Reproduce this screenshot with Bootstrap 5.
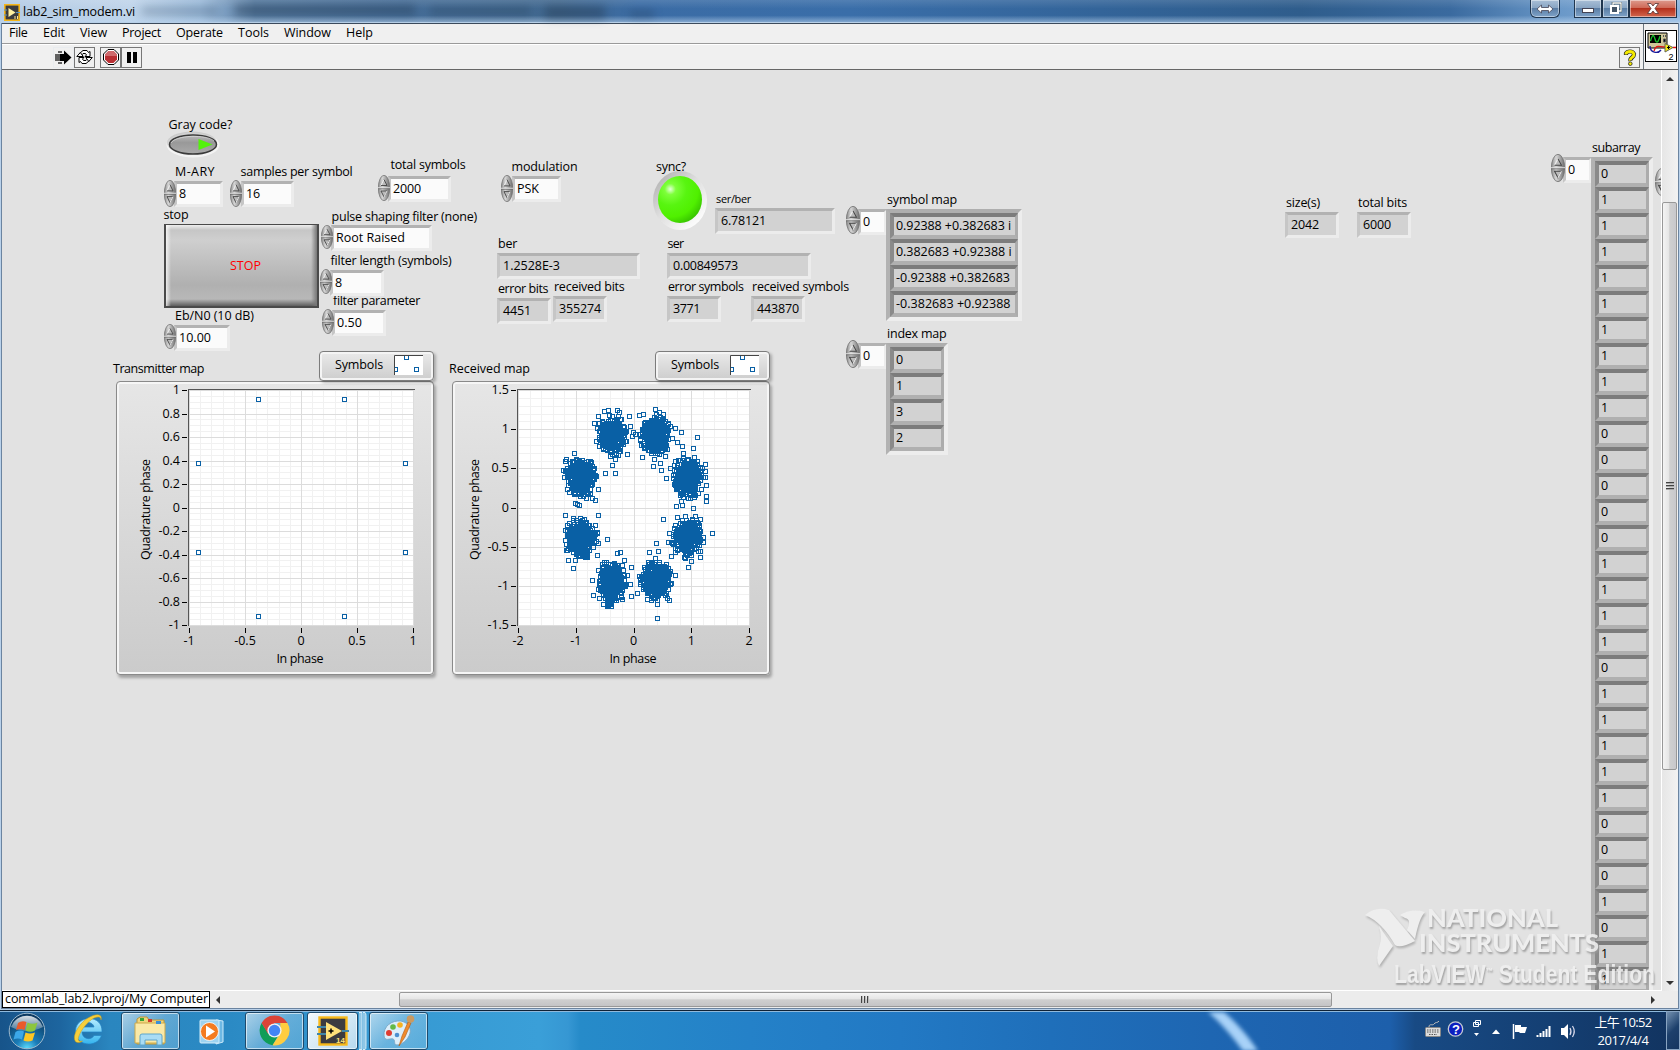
<!DOCTYPE html>
<html lang="zh-Hant">
<head>
<meta charset="utf-8">
<title>lab2_sim_modem.vi</title>
<link href="https://cdn.jsdelivr.net/npm/bootstrap@5.3.0/dist/css/bootstrap.min.css" rel="stylesheet">
<style>
html,body{height:1050px;overflow:hidden}
body{width:1680px;font:12.5px/16px "Open Sans","Noto Sans","Noto Sans CJK TC",sans-serif;color:#000;background:#b9d1ea}
svg{display:block}
.fit{white-space:nowrap;display:inline-block;height:16px;line-height:16px}
.titlebar{height:23px;background:linear-gradient(180deg,rgba(255,255,255,.12) 0,transparent 40%,transparent 70%,rgba(190,215,240,.55) 100%),linear-gradient(90deg,#b4cbe4 0,#bfd4ea 130px,#9cbbdb 200px,#54799f 255px,#456d98 400px,#41688f 560px,#3b6ca5 640px,#3a6ea9 850px,#336499 1100px,#2f5d8c 1300px,#3a6a9f 1450px,#6a98c8 1560px,#8db5de 1680px);border-bottom:1px solid #b8d0e8}
.caption{padding-top:2px}
.blurs{left:140px;top:2px;width:540px;height:19px;filter:blur(4px)}
.wbtn{height:18px;border:1px solid #20364f;border-top:0;box-shadow:inset 0 0 0 1px rgba(255,255,255,.45);background:linear-gradient(#a9bfd6 0,#8aa6c4 45%,#5b7ea5 50%,#7fa3c9 100%)}
.wbtn.shut{background:linear-gradient(#dd9a8d 0,#cf6a58 45%,#b5301c 50%,#d2674e 100%)}
.client{height:985px;margin:0 2px;border-top:1px solid #3c4b5c;background:#f0f0f0;box-shadow:0 0 0 1px #6b84a0}
.menus{height:20px;border-bottom:1px solid #9a9a9a;padding-bottom:2px}
.tools{height:25px;border-top:1px solid #fff}
.tbtn{width:21px;height:21px;border:1px solid #777}
.panelwrap{height:922px;border-top:1px solid #666}
.front{background:#e2e2e2;width:1660px;height:921px;overflow:hidden;border-right:1px solid #fff;border-bottom:1px solid #fff}
.vsb{width:16px;background:linear-gradient(90deg,#e6e6e6,#f2f2f2)}
.vthumb{width:15px;height:568px;border:1px solid #989898;border-radius:2px;background:linear-gradient(90deg,#f4f4f4 0,#e6e6e6 45%,#cfcfcf 52%,#c8c8cc 100%)}
.hsb{height:17px;background:#ececec}
.hthumb{width:933px;height:15px;border:1px solid #989898;border-radius:2px;background:linear-gradient(#f4f4f4 0,#e6e6e6 45%,#cfcfcf 52%,#c4c4c6 100%)}
.path-box{width:208px;height:17px;border:1px solid #000;background:#fff;padding:0 0 2px 2px}
.item{position:absolute}
.ctl,.ind{position:absolute;border:3px solid;border-color:#b2b2b2 #ececec #ececec #c6c6c6;background:#fbfbfb;padding-left:2px}
.ind{background:#d2d2d2;padding-left:3px}
.arr{position:absolute;border:4px solid;border-color:#aeaeae #ededed #ededed #b2b2b2;background:#b0b0b0}
.cellbox{height:26px;border:4px solid;border-color:#7c7c7c #acacac #b0b0b0 #8a8a8a;border-width:4px 3px 4px 4px;background:#d2d2d2;padding-left:2px}
.stopbtn{position:absolute;left:162px;top:154px;width:155px;height:84px;border:2px solid #4a4a4a;border-top-width:1px;border-radius:0;background:linear-gradient(90deg,rgba(255,255,255,.75) 0,transparent 5px,transparent 145px,#777 100%),linear-gradient(#eee 0,#c6c6c6 5px,#cfcfcf 15px,#b0b0b0 60px,#b8b8b8 74px,#5e5e5e 100%);color:#f00;font-size:12.5px;padding-right:4px}
.chartbox{position:absolute;top:312px;width:318px;height:294px;border:1px solid #8a8a8a;border-radius:4px;box-shadow:inset 0 0 0 2px #f6f6f6,2px 3px 3px rgba(0,0,0,.28);background:linear-gradient(#e6e6e6,#cbcbcb)}
.legendbox{position:absolute;top:281px;width:115px;height:30px;border:1px solid #7c7c7c;border-radius:4px;box-shadow:inset 0 0 0 2px #f4f4f4,2px 2px 3px rgba(0,0,0,.25);background:linear-gradient(#eaeaea,#cdcdcd);padding:0 10px 2px 15px}
.led{position:absolute;left:651px;top:101px;width:54px;height:59px;border-radius:50%;background:linear-gradient(135deg,#b4b4b4 10%,#dedede 45%,#fff 90%);padding:5px;filter:blur(.4px)}
.bulb{width:44px;height:47px;border-radius:50%;background:radial-gradient(circle at 28% 28%,#e4ffd8 0,#7dff3a 12%,#58f510 35%,#50f000 60%,#2cb100 88%,#1e6a05 100%)}
.taskbar{height:40px;margin-top:2px;border-top:1px solid #0f2236;box-shadow:inset 0 1px 0 #8fb9dc;background:linear-gradient(90deg,#17548a 0,#1d659f 60px,#2a86bf 110px,#2b8ac4 230px,#3699d2 380px,#3a9fd8 540px,#3697d3 568px,#268bc9 580px,#2481c8 750px,#2279c4 900px,#1f6fba 1050px,#1e66b2 1210px,#1d5fab 1390px,#184a84 1415px,#143f73 1550px,#12335f 1680px)}
.task{height:38px;width:59px;border:1px solid #1e4a6c;border-radius:3px;box-shadow:inset 0 0 0 1px rgba(255,255,255,.6);background:linear-gradient(135deg,rgba(255,255,255,.6),rgba(200,228,245,.35) 50%,rgba(160,210,235,.3))}
.task.now{background:linear-gradient(135deg,#f3f9fd,#b7d9ee)}
.clock{color:#fff;width:86px;font-size:13px}
.showdesk{width:14px;height:39px;border:1px solid #89a4c2;background:linear-gradient(135deg,#7390b0,#1d406c 50%,#153560)}
.brand{position:absolute;color:#f0f0f0;opacity:.88;font-weight:900;text-shadow:1px 2px 2px #999;white-space:nowrap;line-height:24px}
.brand span{transform-origin:0 50%}
.tm{font-size:9px;vertical-align:9px;line-height:0}
.streak{left:1200px;top:1px;filter:blur(2px)}
</style>
</head>
<body>
<header class="titlebar d-flex justify-content-between position-relative">
  <svg class="blurs position-absolute" viewBox="0 0 540 19"><g fill="#24384f" opacity=".4"><rect x="2" y="5" width="75" height="8" opacity=".6"/><rect x="95" y="3" width="180" height="10"/><rect x="290" y="5" width="100" height="8" opacity=".8"/><rect x="405" y="4" width="60" height="13"/><rect x="490" y="9" width="24" height="6"/></g></svg>
  <div class="caption d-flex align-items-center position-relative ps-1">
    <svg width="16" height="17" viewBox="0 0 16 17"><rect x=".8" y=".8" width="14.4" height="15.4" fill="#3b3b3f" stroke="#f3b51c" stroke-width="1.6"/><path d="M4.500 4l7 4.500-7 4.500z" fill="#fff0a0"/><path d="M0 6h3M0 11h3M12 8.500h4" stroke="#5c93b8"/><path d="M11 12v3M13.500 12v3" stroke="#ffe79a"/></svg>
    <span class="fit" style="margin-left:3px" data-w="112">lab2_sim_modem.vi</span>
  </div>
  <div class="d-flex align-items-start" style="padding-right:3px">
    <div class="wbtn rounded-bottom d-flex align-items-center justify-content-center" style="width:30px;margin-right:14px"><svg width="18" height="10" viewBox="0 0 18 10"><path d="M1 5l4.500-4v2.500h7V1L17 5l-4.500 4V6.500h-7V9z" fill="#fff" stroke="#445" stroke-width=".8"/></svg></div>
    <div class="wbtn d-flex align-items-center justify-content-center" style="width:28px"><svg width="12" height="10"><rect x=".5" y="4.500" width="11" height="4" fill="#fff" stroke="#445"/></svg></div>
    <div class="wbtn d-flex align-items-center justify-content-center" style="width:27px"><svg width="13" height="13" viewBox="0 0 13 13"><path d="M4 3V1h8v8h-2" fill="none" stroke="#344" stroke-width="2.500"/><path d="M4 3V1h8v8h-2" fill="none" stroke="#fff" stroke-width="1.300"/><rect x="2" y="4" width="7" height="7" fill="#456" stroke="#fff" stroke-width="2"/></svg></div>
    <div class="wbtn shut d-flex align-items-center justify-content-center" style="width:48px"><svg width="12" height="11" viewBox="0 0 12 11"><path d="M.5.500h3.500l2 2.500L8 .5h3.500L8 5.500l3.500 5H8L6 8l-2 2.500H.5l3.500-5z" fill="#fff" stroke="#533" stroke-width=".8"/></svg></div>
  </div>
</header>

<main class="client">
  <div class="d-flex">
    <div class="flex-grow-1">
      <nav class="menus d-flex align-items-center" id="menus"></nav>
      <div class="tools d-flex align-items-center">
        <div class="tbtn d-flex align-items-center justify-content-center border-secondary-subtle" style="margin-left:51px"><svg width="17" height="15" viewBox="0 0 17 15"><path d="M0 4v7M2 4v7M4 1v2M4 4v7M4 12v2M6 1v2M6 12v2" stroke="#000" stroke-width="1.200"/><path d="M5 4h4V.5l7.500 7-7.500 7V11H5z"/></svg></div>
        <div class="tbtn d-flex align-items-center justify-content-center"><svg width="17" height="16" viewBox="0 0 17 16"><g fill="#fff" stroke="#000"><path d="M3.500 4.500L7 1.500h4l1.500 2 1.500-1v5H9l1.500-1.500-1-1.500H7L5.500 6z"/><path d="M13.500 11.500L10 14.500H6l-1.500-2-1.500 1v-5h5L6.500 10l1 1.500H10l1.500-1.500z"/><path d="M.8 7.500l3.500-4 3 4zM9.800 8.500l3 4 3.500-4z"/></g></svg></div>
        <div class="tbtn d-flex align-items-center justify-content-center" style="margin-left:5px"><svg width="16" height="16" viewBox="0 0 16 16"><path d="M5 .5h6L15.500 5v6L11 15.500H5L.5 11V5z" fill="#fff" stroke="#000"/><path d="M5.500 2h5L14 5.500v5L10.500 14h-5L2 10.500v-5z" fill="#b92f33"/><path d="M5.500 2h5L14 5.500V7H2V5.500z" fill="#cf6a6d"/></svg></div>
        <div class="tbtn d-flex align-items-center justify-content-center"><svg width="10" height="11"><path d="M0 0h4v11H0zM6 0h4v11H6z"/></svg></div>
        <div class="tbtn ms-auto d-flex align-items-center justify-content-center" style="margin-right:3px"><svg width="14" height="17" viewBox="0 0 14 17"><g fill="none"><path d="M3 6V4.500Q4 2.500 7 2.500t4 2.500Q11 7 9 8.500T7.500 12" stroke="#222" stroke-width="4.200"/><path d="M3 5.500V4.500Q4 2.500 7 2.500t4 2.500Q11 7 9 8.500T7.500 11.500" stroke="#f5ea00" stroke-width="2.800"/></g><circle cx="7.300" cy="14.700" r="1.800" fill="#f5ea00" stroke="#222" stroke-width=".8"/></svg></div>
      </div>
    </div>
    <div class="border-start border-secondary d-flex align-items-center justify-content-center" style="width:35px;padding-bottom:1px">
      <svg width="32" height="32" viewBox="0 0 32 32"><rect x=".5" y=".5" width="31" height="31" fill="#fff" stroke="#000"/><path d="M3 3h19v15H3z" fill="#cfc79a" stroke="#000"/><path d="M5 5h11v8H5z"/><path d="M5.500 11c2-7 3-7 4.500-2s3 4 5-3" fill="none" stroke="#18c52a" stroke-width="1.300"/><path d="M18.500 5v2M20.500 5v2M18.500 9v3h2V9z" stroke="#555"/><path d="M5 16c0 7 8 8 11 4" fill="none" stroke="#1a1a9a" stroke-width="1.400"/><path d="M9 21c2-7 5-4 11-4M28 17.500h3" fill="none" stroke="#e01515" stroke-width="1.400"/><path d="M20 13.500l8 4-8 4.500z" fill="#f7ec15" stroke="#665"/><path d="M22 17.500h3M23.500 16v3" stroke="#000"/><text x="23.500" y="29.500" font-size="9" font-family="Liberation Sans">2</text></svg>
    </div>
  </div>
  <div class="panelwrap d-flex">
    <section class="front position-relative" id="front">
      <div class="stopbtn btn d-flex align-items-center justify-content-center"><span class="fit" data-w="31">STOP</span></div>
      <svg class="item" style="left:163px;top:60px" width="56" height="30" viewBox="0 0 56 30"><defs><linearGradient id="tg" x2="0" y2="1"><stop stop-color="#bbb"/><stop offset=".4" stop-color="#999"/><stop offset="1" stop-color="#aaa"/></linearGradient></defs><ellipse cx="28" cy="15" rx="26.500" ry="12.500" fill="#fff" opacity=".6"/><ellipse cx="27" cy="13" rx="25" ry="11.500" fill="#bbb" opacity=".6"/><ellipse cx="28" cy="14.500" rx="23.500" ry="9.500" fill="url(#tg)" stroke="#3a3a3a" stroke-width="1.500"/><path d="M6 13c4-8 36-9 43-2" fill="none" stroke="#ddd" opacity=".7"/><path d="M33.500 9l14 5.500-14 5.500z" fill="#53f20c"/></svg>
      <div class="led"><div class="bulb"></div></div>
    </section>
    <div class="vsb d-flex flex-column">
      <svg width="16" height="132"><path d="M4 11l4-4 4 4z" fill="#333"/></svg>
      <div class="vthumb d-flex align-items-center justify-content-center"><svg width="8" height="9"><path d="M0 .5h8M0 3.500h8M0 6.500h8" stroke="#444"/><path d="M0 1.500h8M0 4.500h8M0 7.500h8" stroke="#aaa"/></svg></div>
      <svg class="mt-auto" width="16" height="16"><path d="M4 6l4 4 4-4z" fill="#333"/></svg>
    </div>
  </div>
  <div class="hsb d-flex align-items-center">
    <div class="path-box d-flex align-items-center"><span class="fit" data-w="203">commlab_lab2.lvproj/My Computer</span></div>
    <svg width="189" height="16"><path d="M10 4L6 8l4 4z" fill="#333"/></svg>
    <div class="hthumb d-flex align-items-center justify-content-center"><svg width="9" height="7"><path d="M.5 0v7M3.500 0v7M6.500 0v7" stroke="#444"/><path d="M1.500 0v7M4.500 0v7M7.500 0v7" stroke="#bbb"/></svg></div>
    <svg class="ms-auto" style="margin-right:21px" width="8" height="16"><path d="M2 4l4 4-4 4z" fill="#333"/></svg>
  </div>
</main>

<footer class="taskbar d-flex align-items-center position-relative" id="taskbar">
  <svg class="streak position-absolute" width="70" height="39"><path d="M8 0h16c14 12 24 24 34 39H43C32 24 22 12 8 0z" fill="#a8d2f8"/></svg>
  <svg width="121" height="40" viewBox="0 0 121 40">
    <defs><radialGradient id="orb" cx=".5" cy="1" r=".9"><stop stop-color="#5fe0ff"/><stop offset=".35" stop-color="#1a7cb8"/><stop offset="1" stop-color="#0c3a62"/></radialGradient><linearGradient id="gl" x2="0" y2="1"><stop stop-color="#fff" stop-opacity=".85"/><stop offset="1" stop-color="#fff" stop-opacity=".2"/></linearGradient><linearGradient id="ie" x2="0" y2="1"><stop stop-color="#b5ecff"/><stop offset="1" stop-color="#35b4ee"/></linearGradient></defs>
    <circle cx="27" cy="20" r="17.800" fill="url(#orb)" stroke="#9fb9cc"/><path d="M11 16a17 17 0 0 1 32 0q-16 8-32 0z" fill="url(#gl)"/>
    <path d="M18 12q4-3 8.500-1l-2 8q-4-2-8.500 0z" fill="#ea5a2a"/><path d="M27.500 11.500q5 2.500 10 0l-2.500 8q-5 2.500-9.500 0z" fill="#8cc63f"/><path d="M15.500 21q4-2.500 8.500-.5l-2 8q-4-2-8.500 0z" fill="#3ba7e8"/><path d="M25.500 21.500q4.500 2 9.500 0l-2.500 8q-4.500 2-9 0z" fill="#fdc623"/>
    <path d="M102 21H82c0 7 9 9 12 3.500h7.500C97 38 74 35 75.500 19 77 4 103 3 102 21zM82 16h12c-1-6-11-6-12 0z" fill="url(#ie)" stroke="#2383c4" stroke-width=".7"/>
    <path d="M101 9c2-8-8-6-16 0-8 7-13 17-9.500 21.500 2 2 5 1 7-.5-4 1-5-1-3.500-5C81 19 88 10 94 7c5-2 7-1 7 2z" fill="#f6cf3c" stroke="#c89b16" stroke-width=".5"/>
  </svg>
  <div class="task d-flex align-items-center justify-content-center"><svg width="34" height="32" viewBox="0 0 34 32"><path d="M3 4l3-2h7l2 3h15v24H3z" fill="#f0d57c" stroke="#b9963a"/><path d="M1 8h30v20H1z" fill="#fae9a8" stroke="#cda94a"/><path d="M6 3h4v3H6z" fill="#3aa635"/><path d="M14 4h4v3h-4z" fill="#d33a2c"/><path d="M22 6h5v3h-5z" fill="#3a8fd8"/><path d="M6 30V21q0-2 2-2h18q2 0 2 2v9h-5v-5H11v5z" fill="#a9dcf4" stroke="#5ea6cc"/></svg></div>
  <svg width="65" height="38" viewBox="0 0 65 38"><path d="M36 8l7 1v21l-7 2z" fill="#6db8e4" stroke="#cdeafa"/><rect x="20" y="8" width="19" height="23" rx="1" fill="#9ed3f0" stroke="#d5eefb"/><circle cx="29.500" cy="19.500" r="9" fill="#f47b20" stroke="#fff" stroke-width=".8"/><path d="M26 13.500l9 6-9 6z" fill="#fff"/></svg>
  <div class="task d-flex align-items-center justify-content-center"><svg width="31" height="31" viewBox="0 0 48 48"><path d="M4 12.500a23 23 0 0 0 17 34.300L31 30 24 24 14 28z" fill="#0f9d58"/><path d="M44 12.500A23 23 0 0 1 21 46.800L33 28V12.500z" fill="#ffcd40"/><path d="M4 12.500A23 23 0 0 1 44 12.500H24L14 29z" fill="#db4437"/><circle cx="24" cy="24" r="11" fill="#f1f1f1"/><circle cx="24" cy="24" r="8.800" fill="#4285f4"/></svg></div>
  <div class="task now d-flex align-items-center justify-content-center" style="width:51px;margin-left:3px"><svg width="32" height="30" viewBox="0 0 32 30"><rect x="2.500" y="1.500" width="27" height="27" fill="#3c3c40" stroke="#f8b91a" stroke-width="2.400"/><path d="M0 11h9M0 18h9M25 15h7" stroke="#3f86a8" stroke-width="2"/><path d="M9 6l16 9-16 9z" fill="#ffe27a"/><path d="M11.500 15h5M14 12.500v5" stroke="#000" stroke-width="1.500"/><text x="19" y="26.500" font-size="8" font-weight="700" fill="#ffe27a" font-family="Liberation Sans">14</text></svg></div>
  <svg width="11" height="38"><path d="M1 .5h3v37H1M5 .5h2q1 1 1 3v31q0 3-1 3H5" fill="#8ec6e6" stroke="#d4ecf8"/></svg>
  <div class="task d-flex align-items-center justify-content-center"><svg width="34" height="34" viewBox="0 0 34 34"><path d="M2 22C1 12 10 6 19 7c9 2 11 9 8 15s-9 9-12 9c-4 0-1-5-4-6s-8 3-9-3z" fill="#dceefa" stroke="#7ba9c8"/><circle cx="7" cy="19" r="3" fill="#e03c31"/><circle cx="11" cy="13" r="2.800" fill="#63b946"/><circle cx="18" cy="11" r="2.800" fill="#f6b221"/><circle cx="15" cy="21" r="2.300" fill="#4b8fd0"/><path d="M17 32l3-10 6-14 3 1-6 14z" fill="#f08a2c" stroke="#b45c12" stroke-width=".6"/><circle cx="28.500" cy="5" r="3.800" fill="#c99a62"/></svg></div>
  <div class="ms-auto d-flex align-items-center">
    <svg width="158" height="38" viewBox="1422 1011 158 38">
      <rect x="1425.500" y="1026.500" width="15" height="9" rx="1" fill="#ddd" stroke="#888"/><path d="M1427 1029h12M1427 1031h12M1429 1033.500h8" stroke="#555" stroke-dasharray="1.500 1"/><path d="M1429 1026c0-4 4-1 5-3s4-1 5-3" fill="none" stroke="#bbb"/>
      <circle cx="1455.500" cy="1028" r="7.200" fill="#0b1fc0" stroke="#c8ccd4" stroke-width="1.300"/><text x="1452" y="1033" font-size="13" font-weight="700" fill="#fff" font-family="Liberation Sans">?</text>
      <path d="M1475.500 1019.500h5v4h-5zM1473.500 1021.500h5v4h-5z" fill="#184a84" stroke="#fff"/><path d="M1474 1032h5l-2.500 3zM1492 1033h8l-4-4.500z" fill="#fff"/>
      <path d="M1513.500 1023v15" stroke="#fff" stroke-width="1.500"/><path d="M1515 1024h6v2h6l-2 6h-5l-1-1h-4z" fill="#fff"/>
      <path d="M1537.500 1036v-2M1540.500 1036v-4M1543.500 1036v-6M1546.500 1036v-8M1549.500 1036v-11" stroke="#fff" stroke-width="2"/>
      <path d="M1561 1027h3l4-4v15l-4-4h-3z" fill="#fff"/><path d="M1570 1027q2 3.500 0 7M1572.500 1025q3.500 5.500 0 11" fill="none" stroke="#dde" stroke-width="1.200"/>
    </svg>
    <div class="clock d-flex flex-column align-items-center"><span class="fit" data-w="57" style="margin-bottom:2px">上午 10:52</span><span class="fit" data-w="51">2017/4/4</span></div>
    <div class="showdesk"></div>
  </div>
</footer>
<script src="https://cdn.jsdelivr.net/npm/bootstrap@5.3.0/dist/js/bootstrap.bundle.min.js"></script>
<script>
// Canvas origin in window coordinates
const OX = 2, OY = 70;
const front = document.getElementById('front');
const add = (cls, x, y, w, h, html, parent = front) => {
  const e = document.createElement('div');
  e.className = cls;
  e.style.left = (x - OX) + 'px'; e.style.top = (y - OY) + 'px';
  if (w) e.style.width = w + 'px';
  if (h) e.style.height = h + 'px';
  e.innerHTML = html; parent.append(e); return e;
};
const txt = (t, w) => `<span class="fit"${w ? ` data-w="${w}"` : ''}>${t}</span>`;

// Menu: label, width, gap before it
[['File',18.5,7],['Edit',22,15.5],['View',27,15],['Project',39,15],['Operate',47,15],['Tools',31,15],['Window',47,15],['Help',27,15]]
  .forEach(([t, w, g]) => document.getElementById('menus').insertAdjacentHTML('beforeend',
    `<span class="fit" data-w="${w}" style="margin-left:${g}px">${t}</span>`));

// Free labels: text, left, vertical centre, width
[['Gray code?',168.5,125,64],['M-ARY',175,172,40],['samples per symbol',240.5,172,112],['total symbols',390.5,165,75],
 ['modulation',511.5,167,66],['stop',163.5,215,25],['pulse shaping filter (none)',331.500,217,145.5],['filter length (symbols)',330.5,261,121],
 ['filter parameter',333,301,87],['Eb/N0 (10 dB)',175,316,79],['ber',498,244,19],['error bits',498,289,50],
 ['received bits',554,287,70.5],['sync?',656,167,30],['<small>ser/ber</small>',716,199,35],['ser',667.5,244,16],
 ['error symbols',668,287,75.5],['received symbols',752,287,97],['symbol map',887,200,70],['index map',887,334,59.5],
 ['size(s)',1286,203,34],['total bits',1358,203,49],['subarray',1592,148,48],['Received map',449,369,81],['Transmitter map',113,369,91]]
  .forEach(([t, x, y, w]) => add('item', x, y - 8, 0, 16, txt(t, w)));

// Increment / decrement knob
const knob = (x, y, w, h) => add('item', x, y, w, h, `<svg width="${w}" height="${h}" viewBox="0 0 12 26" preserveAspectRatio="none"><ellipse cx="6" cy="13" rx="5.700" ry="12.700" fill="url(#kg)" stroke="#707070" stroke-width=".7"/><path d="M0 12.800h12" stroke="#e4e4e4"/><path d="M0 13.800h12" stroke="#666" stroke-width=".7"/><path d="M3 10.500l3-6 3 6z" fill="#bbb"/><path d="M3 10.500l3-6" stroke="#eee"/><path d="M6 4.500l3 6H3" fill="none" stroke="#444" stroke-width=".9"/><path d="M9 16l-3 6-3-6z" fill="#bbb" stroke="#444" stroke-width=".9"/><path d="M9 16l-3 6" stroke="#eee"/></svg>`);
front.insertAdjacentHTML('beforeend', '<svg class="item" width="0" height="0"><defs><linearGradient id="kg"><stop stop-color="#8a8a8a"/><stop offset=".35" stop-color="#d6d6d6"/><stop offset="1" stop-color="#707070"/></linearGradient></defs></svg>');

// Controls: value, knob x, knob y, knob h, field x, y, w, h, text width
[['8',163,180,27,174,181,49,26,0],['16',229,180,27,241,181,53,26,14],['2000',377,175,26,388,176,63,26,28],['PSK',500,175,27,512,176,49,26,22],
 ['Root Raised',320,225,24,331,225,101,26,69],['8',319,269,25,330,270,54,26,0],['0.50',321,309,25,332,310,54,26,25],['10.00',163,324,25,174,325,56,26,32]]
  .forEach(([v, kx, ky, kh, x, y, w, h, tw]) => { add('ctl d-flex align-items-center', x, y, w, h, txt(v, tw)); knob(kx + .5, ky, 12, kh); });
[[845,206,858,209],[845,340,858,343],[1550,154,1563,157]]
  .forEach(([kx, ky, x, y]) => { add('ctl d-flex align-items-center', x, y, 29, 26, txt('0')); knob(kx + .5, ky, 14, 28); });
knob(1655, 168, 14, 28);

// Indicators
[['1.2528E-3',497,253,143,57],['0.00849573',667,253,144,65],['6.78121',715,208,120,45],['4451',497,298,54,28],['355274',553,296,54,42],
 ['3771',667,296,54,27],['443870',751,296,54,42],['2042',1285,212,54,28],['6000',1357,212,54,28]]
  .forEach(([v, x, y, w, tw]) => add('ind d-flex align-items-center', x, y, w, 26, txt(v, tw)));

// Arrays
const arr = (x, y, w, rows, ws = []) => add('arr', x, y, w, rows.length * 26 + 8,
  rows.map((r, i) => `<div class="cellbox d-flex align-items-center">${txt(r, ws[i])}</div>`).join(''));
arr(886, 209, 136, ['0.92388 +0.382683 i','0.382683 +0.92388 i','-0.92388 +0.382683','-0.382683 +0.92388'], [115,115.5,114,114.5]);
arr(886, 343, 62, [...'0132']);
arr(1591, 157, 62, [...'01111111110000011110111110001011']);

// Graphs
const marker = (x, y) => `M${Math.round(x) - 2 + .5} ${Math.round(y) - 2 + .5}h4v4h-4z`;
function graph(fx, px, pw, lx, qx, cx, xt, yt, nx, ny, path) {
  add('chartbox', fx, 382, 0, 0, '').style.top = '311px';
  const X0 = px + 1, Y0 = 390, W = pw - 2, H = 235;
  let g = `<rect x="${px}" y="389" width="${pw}" height="237" fill="#fff"/><g shape-rendering="crispEdges"><path stroke="#f1f1f1" d="`;
  for (let i = 0; i <= nx; i++) g += `M${Math.round(X0 + W * i / nx) + .5} 390v236`;
  for (let i = 0; i <= ny; i++) g += `M${px} ${Math.round(Y0 + H * i / ny) + .5}h${pw}`;
  g += '"/><path stroke="#dcdcdc" d="';
  xt.forEach((t, i) => g += `M${Math.round(X0 + W * i / (xt.length - 1)) + .5} 390v236`);
  yt.forEach((t, i) => g += `M${px} ${Math.round(Y0 + H * i / (yt.length - 1)) + .5}h${pw}`);
  g += `"/><path fill="none" stroke="#555" d="M${px + .5} 626V389.500h${pw}"/><path stroke="#000" d="`;
  xt.forEach((t, i) => g += `M${Math.round(X0 + W * i / (xt.length - 1)) + .5} 628v5`);
  yt.forEach((t, i) => g += `M${px - 6} ${Math.round(Y0 + H * i / (yt.length - 1)) + .5}h5`);
  g += `"/></g><g font-size="12.5" fill="#000">`;
  xt.forEach((t, i) => g += `<text text-anchor="middle" x="${X0 + W * i / (xt.length - 1)}" y="645">${t}</text>`);
  yt.forEach((t, i) => g += `<text text-anchor="end" x="${px - 8}" y="${Y0 + 4 + H * i / (yt.length - 1)}">${t}</text>`);
  g += `<text x="${cx - 23.5}" y="663" textLength="47">In phase</text><text transform="translate(${qx + 4} 560) rotate(-90)" textLength="101">Quadrature phase</text></g>`;
  g += `<path shape-rendering="crispEdges" fill="none" stroke="#0960a5" d="${path}"/>`;
  add('item', fx, 382, 0, 0, `<svg width="318" height="293" viewBox="${fx} 382 318 293">${g}</svg>`);
  add('legendbox d-flex align-items-center', lx, 0, 0, 0, txt('Symbols', 48) +
    `<svg class="ms-auto" width="29" height="20"><path fill="#fff" d="M0 0h29v20H0z"/><path stroke="#444" fill="none" d="M.5 20V.5H29"/><path shape-rendering="crispEdges" fill="none" stroke="#0960a5" d="M10.500 1v3.500h4V1M1 12.500h2.500v4H1M20.500 12.500h4v4h-4z"/></svg>`).style.top = '281px';
}
const A = .9239, B = .3827;
const pts = [[A,B],[B,A],[-B,A],[-A,B],[-A,-B],[-B,-A],[B,-A],[A,-B]];
graph(116, 188, 226, 319, 146, 300, ['-1','-0.5','0','0.5','1'],
  ['1','0.8','0.6','0.4','0.2','0','-0.2','-0.4','-0.6','-0.8','-1'], 20, 40,
  pts.map(([x, y]) => marker(301.3 + x * 112, 507.5 - y * 117.5)).join(''));

// Noisy received constellation, repeatable generator
let seed = 20174;
const rnd = () => (seed = (seed * 1664525 + 1013904223) % 4294967296) / 4294967296;
const gauss = () => Math.sqrt(-2 * Math.log(rnd() + 1e-9)) * Math.cos(6.283185 * rnd());
let p = '';
pts.forEach(([x, y]) => { for (let i = 0; i < 320; i++) {
  let a = gauss(), b = gauss(); if (Math.hypot(a, b) > 2.3) continue;
  p += marker(633.5 + x * 57.8 + a * 7.1, 507.5 - y * 78.4 + b * 9.3);
}});
// Stray samples, in thirds of a pixel from (440, 340)
[492,214,505,211,532,211,538,217,568,229,475,229,463,250,562,343,526,358,517,376,496,400,526,400,571,259,580,277,586,283,577,289,
 598,226,610,222,646,208,658,217,668,222,691,259,706,264,724,277,772,292,697,295,712,307,727,319,760,325,607,352,640,379,643,358,664,391,661,369,676,349,
 730,340,763,352,772,364,706,364,691,385,796,373,796,394,796,412,799,436,799,469,799,484,709,499,727,496,760,505,724,484,679,415,787,385,
 403,340,379,358,376,364,370,391,373,412,475,448,466,481,418,496,406,489,412,492,457,475,466,406,
 376,526,475,526,502,598,466,556,376,571,472,580,472,577,400,685,385,661,379,631,442,652,406,661,472,646,475,610,400,535,
 541,637,532,640,553,661,574,682,574,769,547,778,460,766,478,775,490,793,502,799,508,793,514,793,508,787,505,796,514,799,511,790,457,721,571,733,
 628,637,655,634,649,610,646,655,625,667,706,706,592,760,652,793,652,835,688,781,682,775,622,778,598,709,610,748,
 670,538,817,580,781,538,781,652,745,682,706,637,694,649,754,664,712,532,736,529,766,529,688,580,685,607,790,607]
  .forEach((v, i, a) => { if (i % 2) p += marker(440 + a[i - 1] / 3, 340 + v / 3); });
graph(452, 517, 233, 655, 475, 633, ['-2','-1','0','1','2'], ['1.5','1','0.5','0','-0.5','-1','-1.5'], 20, 30, p);

// Watermark
add('item', 1364, 906, 0, 0, `<svg width="64" height="64" viewBox="0 0 64 64" opacity=".9" style="filter:drop-shadow(1px 2px 1px #aaa)"><path d="M1 9Q12 0 25 4l26 31Q36 43 31 39 18 16 1 9zM15 20q7 10 14 20L15 60q-4-8 1-22 2-8-1-18z" fill="#f0f0f0"/><path d="M36 9q12-7 25-3-6 6-10 27l-8-9q5-11-2-12z" fill="#f0f0f0"/></svg>`);
const brand = (t, x, y, w, s, f) => {
  const e = add('brand', x, y - 12, 0, 24, `<span class="d-inline-block">${t}</span>`);
  e.style.fontSize = s + 'px'; e.style.fontFamily = f;
  const k = e.firstChild; k.style.transform = `scaleX(${w / k.getBoundingClientRect().width})`;
};
brand('NATIONAL', 1427, 918, 131, 24.5, 'Lato'); brand('INSTRUMENTS', 1419, 943, 180, 24.5, 'Lato');
brand('LabVIEW<span class="tm">™</span> Student Edition', 1394, 974, 261, 26, 'Liberation Sans');

// Set each caption to its nominal width
document.querySelectorAll('[data-w]').forEach(e => {
  const w = +e.dataset.w, n = e.textContent.length, d = w - e.getBoundingClientRect().width;
  if (w && n) e.style.letterSpacing = (d / n) + 'px';
});
</script>
</body>
</html>
